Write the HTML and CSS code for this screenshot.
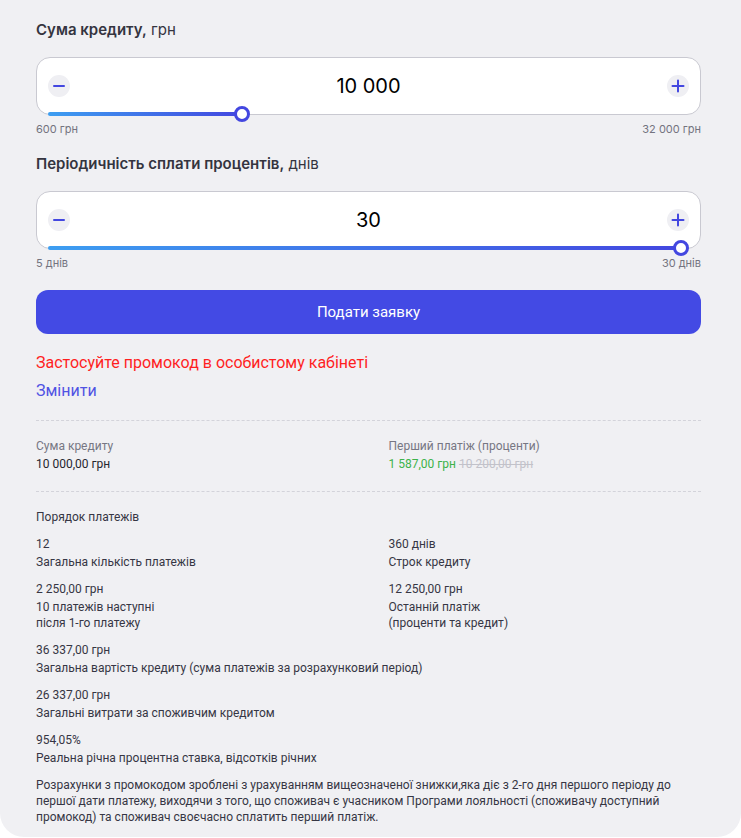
FILE: index.html
```html
<!DOCTYPE html>
<html lang="uk">
<head>
  <meta charset="UTF-8" />
  <meta name="viewport" content="width=device-width, initial-scale=1.0"/>
  <title>Калькулятор кредиту</title>
  <link rel="stylesheet" href="styles.css">
</head>
<body>
  <div class="calc">
    <h2 class="field-title"><b>Сума кредиту,</b> грн</h2>
    <div class="amount-box">
      <button class="step-btn" aria-label="Менше">
        <svg width="22" height="22" viewBox="0 0 22 22"><path d="M6 11h10" stroke="#4347e0" stroke-width="2" stroke-linecap="round"/></svg>
      </button>
      <div class="amount-value">10 000</div>
      <button class="step-btn" aria-label="Більше">
        <svg width="22" height="22" viewBox="0 0 22 22"><path d="M5.5 11h11M11 5.5v11" stroke="#4347e0" stroke-width="2" stroke-linecap="round"/></svg>
      </button>
      <div class="slider">
        <div class="slider-fill" style="width: 30.6%"></div>
        <div class="slider-thumb" style="left: 30.6%"></div>
      </div>
    </div>
    <div class="range-labels"><span>600 грн</span><span>32 000 грн</span></div>

    <h2 class="field-title"><b>Періодичність сплати процентів,</b> днів</h2>
    <div class="amount-box">
      <button class="step-btn" aria-label="Менше">
        <svg width="22" height="22" viewBox="0 0 22 22"><path d="M6 11h10" stroke="#4347e0" stroke-width="2" stroke-linecap="round"/></svg>
      </button>
      <div class="amount-value">30</div>
      <button class="step-btn" aria-label="Більше">
        <svg width="22" height="22" viewBox="0 0 22 22"><path d="M5.5 11h11M11 5.5v11" stroke="#4347e0" stroke-width="2" stroke-linecap="round"/></svg>
      </button>
      <div class="slider">
        <div class="slider-fill" style="width: 100%"></div>
        <div class="slider-thumb" style="left: 100%"></div>
      </div>
    </div>
    <div class="range-labels"><span>5 днів</span><span>30 днів</span></div>

    <button class="submit-btn">Подати заявку</button>

    <div class="promo-warning">Застосуйте промокод в особистому кабінеті</div>
    <a class="promo-change" href="#">Змінити</a>

    <div class="summary">
      <div class="summary-item">
        <div class="summary-label">Сума кредиту</div>
        <div class="summary-value">10 000,00 грн</div>
      </div>
      <div class="summary-item">
        <div class="summary-label">Перший платіж (проценти)</div>
        <div class="summary-value"><span class="price-new">1 587,00 грн</span> <s class="price-old">10 200,00 грн</s></div>
      </div>
    </div>

    <div class="schedule">
      <div class="schedule-title">Порядок платежів</div>
      <div class="schedule-row">
        <div class="info">
          <div class="info-value">12</div>
          <div class="info-label">Загальна кількість платежів</div>
        </div>
        <div class="info">
          <div class="info-value">360 днів</div>
          <div class="info-label">Строк кредиту</div>
        </div>
      </div>
      <div class="schedule-row">
        <div class="info">
          <div class="info-value">2 250,00 грн</div>
          <div class="info-label">10 платежів наступні<br>після 1-го платежу</div>
        </div>
        <div class="info">
          <div class="info-value">12 250,00 грн</div>
          <div class="info-label">Останній платіж<br>(проценти та кредит)</div>
        </div>
      </div>
      <div class="info">
        <div class="info-value">36 337,00 грн</div>
        <div class="info-label">Загальна вартість кредиту (сума платежів за розрахунковий період)</div>
      </div>
      <div class="info">
        <div class="info-value">26 337,00 грн</div>
        <div class="info-label">Загальні витрати за споживчим кредитом</div>
      </div>
      <div class="info">
        <div class="info-value">954,05%</div>
        <div class="info-label">Реальна річна процентна ставка, відсотків річних</div>
      </div>
      <p class="note">Розрахунки з промокодом зроблені з урахуванням вищеозначеної знижки,яка діє з 2-го дня першого періоду до першої дати платежу, виходячи з того, що споживач є учасником Програми лояльності (споживачу доступний промокод) та споживач своєчасно сплатить перший платіж.</p>
    </div>
  </div>
</body>
</html>
```

FILE: styles.css
```css
* {
  margin: 0;
  padding: 0;
  box-sizing: border-box;
}
body {
  background: #ffffff;
  font-family: 'Inter', 'Roboto', sans-serif;
}
.calc {
  background: #f0f0f3;
  border-radius: 0 0 24px 24px;
  padding: 20px 40px 12px 36px;
}
.field-title {
  font-size: 15px;
  line-height: 20px;
  font-weight: 400;
  color: #34343f;
  margin-bottom: 17px;
}
.field-title b {
  font-weight: 600;
}
.amount-box {
  position: relative;
  height: 58px;
  background: #fff;
  border: 1px solid #c9c9d1;
  border-radius: 14px;
  display: flex;
  align-items: center;
  justify-content: space-between;
  padding: 0 11px 0 11px;
}
.step-btn {
  width: 22px;
  height: 22px;
  border-radius: 50%;
  border: none;
  background: #efeff3;
  display: flex;
  align-items: center;
  justify-content: center;
  cursor: pointer;
}
.amount-value {
  font-size: 20px;
  color: #000;
}
.slider {
  position: absolute;
  left: 11px;
  right: 19px;
  bottom: -2px;
  height: 4px;
}
.slider-fill {
  height: 4px;
  border-radius: 2px;
  background: linear-gradient(90deg, #3d9ef1 0%, #4347e0 100%);
}
.slider-thumb {
  position: absolute;
  top: 50%;
  width: 16px;
  height: 16px;
  border-radius: 50%;
  background: #fff;
  border: 3px solid #4347e0;
  transform: translate(-50%, -50%);
}
.range-labels {
  display: flex;
  justify-content: space-between;
  margin-top: 6px;
  margin-bottom: 17px;
  font-size: 11px;
  line-height: 16px;
  color: #73737f;
}
.submit-btn {
  display: block;
  width: 100%;
  height: 44px;
  margin-top: 19px;
  border: none;
  border-radius: 12px;
  background: #434ae4;
  color: #fff;
  font-family: 'Roboto', sans-serif;
  font-size: 15px;
  cursor: pointer;
}
.promo-warning {
  margin-top: 19px;
  font-family: 'Roboto', sans-serif;
  font-size: 16px;
  line-height: 20px;
  color: #ff1f1f;
}
.promo-change {
  display: block;
  margin-top: 8px;
  font-family: 'Roboto', sans-serif;
  font-size: 16px;
  line-height: 20px;
  color: #5053e3;
  text-decoration: none;
}
.summary {
  margin-top: 19px;
  padding: 17px 0 19px;
  border-top: 1px dashed #d3d3da;
  border-bottom: 1px dashed #d3d3da;
  display: grid;
  grid-template-columns: 1fr 1fr;
  gap: 40px;
  font-family: 'Roboto', sans-serif;
  font-size: 12px;
  line-height: 16px;
}
.summary-label {
  color: #777783;
}
.summary-value {
  margin-top: 2px;
  color: #26262f;
}
.price-new {
  color: #3cb34a;
}
.price-old {
  color: #c2c2ca;
}
.schedule {
  padding-top: 17px;
  display: flex;
  flex-direction: column;
  gap: 11px;
  font-family: 'Roboto', sans-serif;
  font-size: 12px;
  line-height: 16px;
  color: #363644;
}
.schedule-row {
  display: grid;
  grid-template-columns: 1fr 1fr;
  gap: 40px;
}
.info-label {
  margin-top: 2px;
}
.note {
  line-height: 16px;
}
```
